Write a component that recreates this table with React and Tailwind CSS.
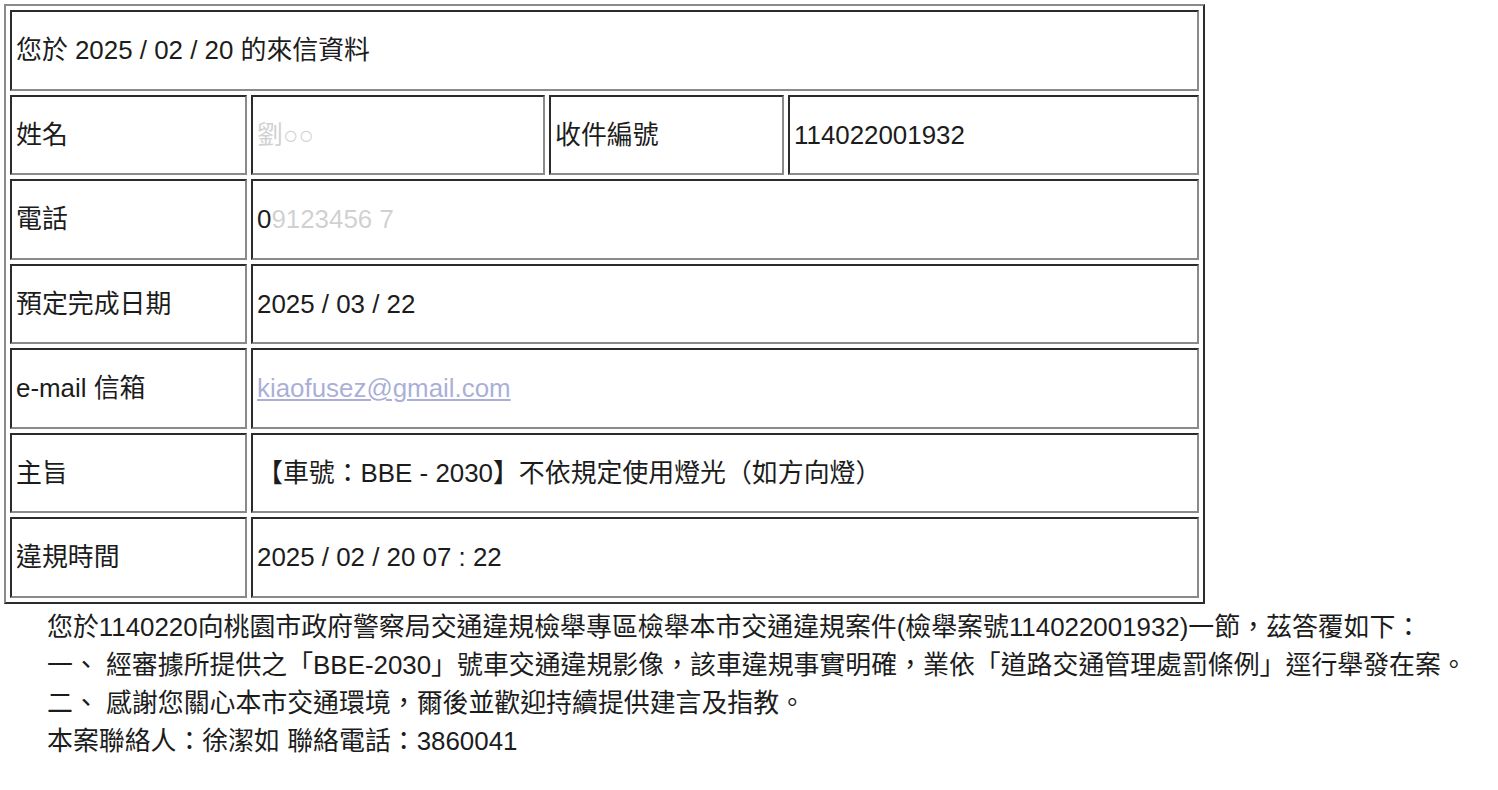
const cellBase =
  "border-2 border-t-[#2b2b2b] border-l-[#2b2b2b] border-b-[#8a8a8a] border-r-[#8a8a8a] h-[80.5px] pl-[4px] pr-[3px] py-0 align-middle text-left font-normal";

const Cell = ({ children, colSpan, className = "" }) => (
  <td colSpan={colSpan} className={`${cellBase} ${className}`}>
    {children}
  </td>
);

const App = () => {
  return (
    <div
      className="bg-white min-h-[790px] text-[#1c1c1c] text-[25.9px] leading-[38px] [text-spacing-trim:space-all]"
      style={{ fontFamily: '"Liberation Sans", "Noto Sans CJK TC", sans-serif' }}
    >
      <div className="pt-[4px] pl-[4px]">
        <table className="border-separate border-spacing-[4px] border-2 border-t-[#8a8a8a] border-l-[#8a8a8a] border-b-[#2b2b2b] border-r-[#2b2b2b] w-[1201px] table-fixed">
          <colgroup>
            <col className="w-[237px]" />
            <col className="w-[294px]" />
            <col className="w-[235px]" />
            <col />
          </colgroup>
          <tbody>
            <tr>
              <Cell colSpan={4}>您於 2025 / 02 / 20 的來信資料</Cell>
            </tr>
            <tr>
              <Cell>姓名</Cell>
              <Cell>
                <span className="opacity-20">劉○○</span>
              </Cell>
              <Cell>收件編號</Cell>
              <Cell>114022001932</Cell>
            </tr>
            <tr>
              <Cell>電話</Cell>
              <Cell colSpan={3}>
                <span>0</span>
                <span className="opacity-20">9123456 7</span>
              </Cell>
            </tr>
            <tr>
              <Cell>預定完成日期</Cell>
              <Cell colSpan={3}>2025 / 03 / 22</Cell>
            </tr>
            <tr>
              <Cell>e-mail 信箱</Cell>
              <Cell colSpan={3}>
                <a className="text-[#2a3a9c] underline opacity-40">kiaofusez@gmail.com</a>
              </Cell>
            </tr>
            <tr>
              <Cell>主旨</Cell>
              <Cell colSpan={3}>【車號：BBE - 2030】不依規定使用燈光（如方向燈）</Cell>
            </tr>
            <tr>
              <Cell>違規時間</Cell>
              <Cell colSpan={3}>2025 / 02 / 20 07 : 22</Cell>
            </tr>
          </tbody>
        </table>
      </div>
      <div className="pl-[47px] pt-[4px] whitespace-nowrap">
        <p>您於1140220向桃園市政府警察局交通違規檢舉專區檢舉本市交通違規案件(檢舉案號114022001932)一節，茲答覆如下：</p>
        <p>一、 經審據所提供之「BBE-2030」號車交通違規影像，該車違規事實明確，業依「道路交通管理處罰條例」逕行舉發在案。</p>
        <p>二、 感謝您關心本市交通環境，爾後並歡迎持續提供建言及指教。</p>
        <p>本案聯絡人：徐潔如 聯絡電話：3860041</p>
      </div>
    </div>
  );
};

export default App;
